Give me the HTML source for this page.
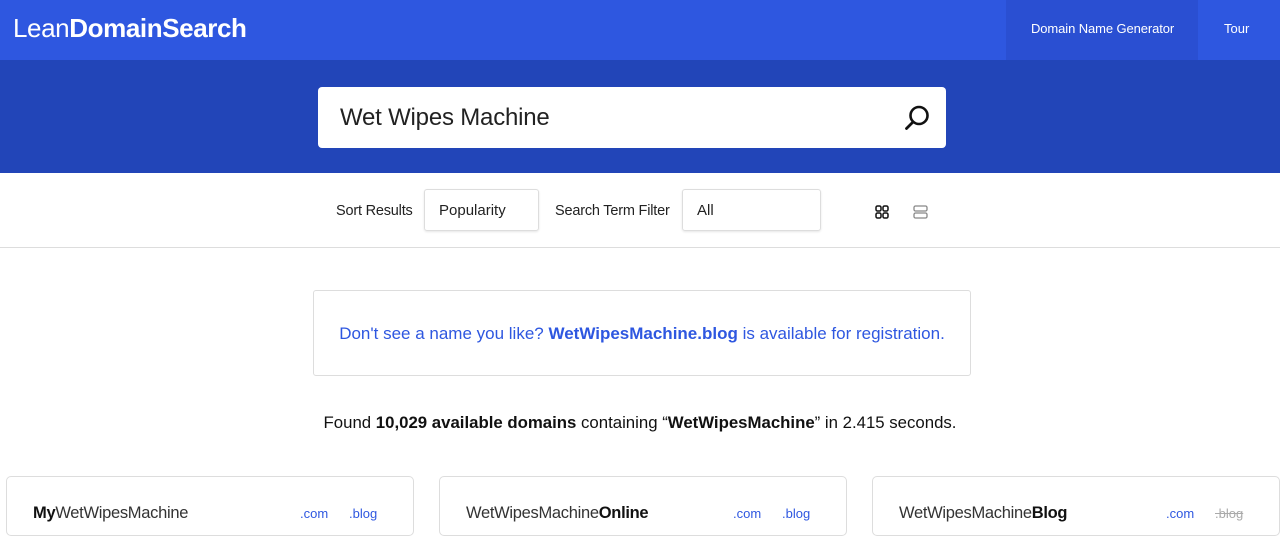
<!DOCTYPE html>
<html><head><meta charset="utf-8"><style>
*{box-sizing:border-box;margin:0;padding:0}
body{width:1280px;height:523px;overflow:hidden;font-family:"Liberation Sans",sans-serif;background:#fff;color:#111}
.top{height:60px;background:#2e57e0;position:relative;color:#fff}
.logo{position:absolute;left:13px;top:13px;font-size:26px;letter-spacing:-0.4px}
.logo b{font-weight:bold}
.nav{position:absolute;top:0;height:60px;line-height:58px;font-size:13px;white-space:nowrap}
.band{height:113px;background:#2245b8;position:relative}
.search{position:absolute;left:318px;top:27px;width:628px;height:61px;background:#fff;border-radius:4px;font-size:24px;color:#222;padding:17px 22px;letter-spacing:-0.2px}
.search svg{position:absolute;right:15px;top:17px}
.bar{height:75px;border-bottom:1px solid #ddd;position:relative;font-size:14.5px;color:#222}
.lbl{position:absolute;top:30px;letter-spacing:-0.2px}
.sel{position:absolute;top:16px;height:42px;border:1px solid #ddd;border-radius:3px;padding:12px 14px;box-shadow:0 1px 2px rgba(0,0,0,.1);font-size:15px}
.notice{position:absolute;left:313px;top:290px;width:658px;height:86px;border:1px solid #ddd;border-radius:3px;color:#2e57e0;font-size:17px;text-align:center;line-height:86px}
.found{position:absolute;top:413px;left:0;width:1280px;text-align:center;font-size:16.8px}
.card{position:absolute;top:476px;width:408px;height:60px;border:1px solid #ddd;border-radius:5px;font-size:16.5px;color:#333}
.card .n{position:absolute;left:26px;top:27px;letter-spacing:-0.3px}
.card .n b{color:#111}
.card .t{position:absolute;top:29px;font-size:13px;color:#2e57e0}
</style></head><body>
<div class="top"><div class="logo">Lean<b>DomainSearch</b></div>
<div class="nav" style="left:1006px;width:192px;background:#2a4fd2;padding-left:25px;letter-spacing:-0.1px">Domain Name Generator</div>
<div class="nav" style="left:1224px">Tour</div></div>
<div class="band"><div class="search">Wet Wipes Machine
<svg width="28" height="28" viewBox="0 0 28 28"><circle cx="16" cy="11.5" r="8.5" fill="none" stroke="#111" stroke-width="2.6"/><line x1="10" y1="18" x2="3.5" y2="24.5" stroke="#111" stroke-width="2.8" stroke-linecap="round"/></svg></div></div>
<div class="bar">
<span class="lbl" style="left:336px">Sort Results</span>
<div class="sel" style="left:424px;width:115px">Popularity</div>
<span class="lbl" style="left:555px">Search Term Filter</span>
<div class="sel" style="left:682px;width:139px">All</div>
<svg style="position:absolute;left:875px;top:32px" width="14" height="14" viewBox="0 0 14 14" fill="none" stroke="#111" stroke-width="1.5"><rect x="1" y="1" width="5" height="5" rx="1.5"/><rect x="8" y="1" width="5" height="5" rx="1.5"/><rect x="1" y="8" width="5" height="5" rx="1.5"/><rect x="8" y="8" width="5" height="5" rx="1.5"/></svg>
<svg style="position:absolute;left:913px;top:32px" width="15" height="14" viewBox="0 0 15 14" fill="none" stroke="#888" stroke-width="1.3"><rect x="1" y="1" width="13" height="5" rx="1.5"/><rect x="1" y="8" width="13" height="5" rx="1.5"/></svg>
</div>
<div class="notice">Don't see a name you like? <b>WetWipesMachine.blog</b> is available for registration.</div>
<div class="found">Found <b>10,029 available domains</b> containing “<b>WetWipesMachine</b>” in 2.415 seconds.</div>
<div class="card" style="left:6px"><span class="n"><b>My</b>WetWipesMachine</span><span class="t" style="left:293px">.com</span><span class="t" style="left:342px">.blog</span></div>
<div class="card" style="left:439px"><span class="n">WetWipesMachine<b>Online</b></span><span class="t" style="left:293px">.com</span><span class="t" style="left:342px">.blog</span></div>
<div class="card" style="left:872px"><span class="n">WetWipesMachine<b>Blog</b></span><span class="t" style="left:293px">.com</span><span class="t" style="left:342px;color:#aaa;text-decoration:line-through">.blog</span></div>
</body></html>
